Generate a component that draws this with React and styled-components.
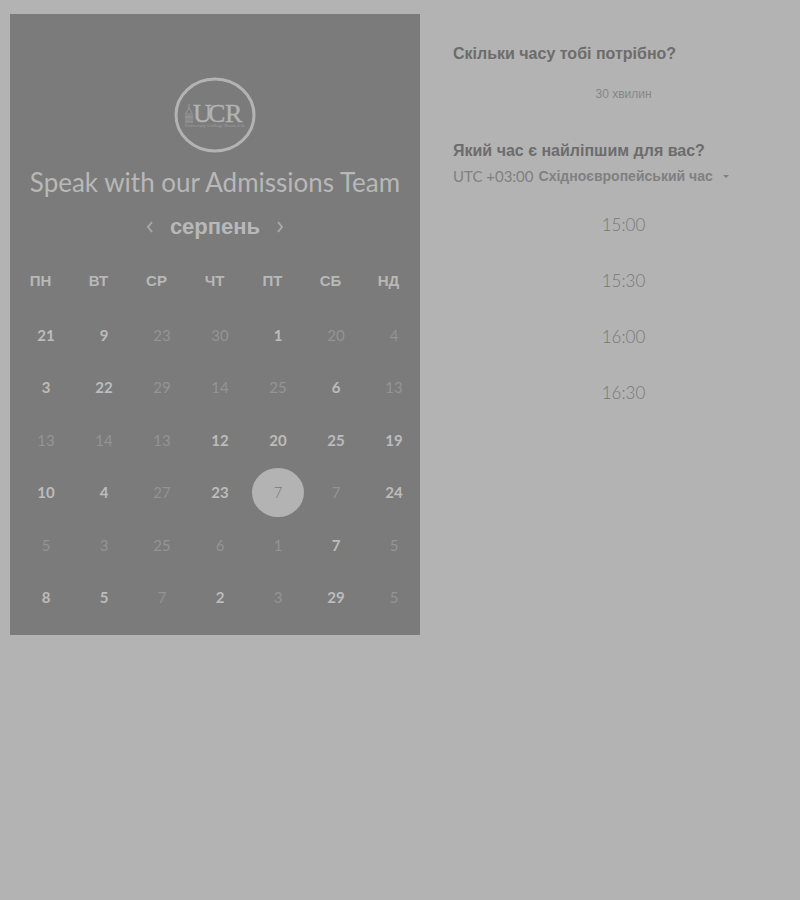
import React, { useState } from "react";
import styled, { createGlobalStyle } from "styled-components";

const GlobalStyle = createGlobalStyle`
  *, *::before, *::after { box-sizing: border-box; }
  body {
    margin: 0;
    background: #b3b3b3;
    font-family: Lato, "Liberation Sans", sans-serif;
  }
  button, select { font: inherit; color: inherit; }
`;

const Page = styled.main`
  display: grid;
  grid-template-columns: minmax(0, 410fr) minmax(0, 341fr);
  gap: 33px;
  align-items: start;
  padding: 14px 6px 14px 10px;
`;

const CalendarPanel = styled.section`
  display: flex;
  flex-direction: column;
  padding: 63px 0 12px;
  background: #7b7b7b;
  color: #b8b8b8;
`;

const Logo = styled.svg`
  display: block;
  align-self: center;
  width: 82px;
  height: 76px;
`;

const Title = styled.h1`
  margin: 13px 0 0;
  font-size: 26px;
  font-weight: 400;
  line-height: 32px;
  text-align: center;
  white-space: nowrap;
`;

const MonthBar = styled.div`
  display: flex;
  align-items: center;
  justify-content: center;
  gap: 12px;
  margin-top: 13px;
`;

const MonthName = styled.h2`
  margin: 0;
  font-family: "Liberation Sans", sans-serif;
  font-size: 22px;
  font-weight: 700;
  line-height: 32px;
`;

const MonthButton = styled.button`
  display: grid;
  place-items: center;
  width: 16px;
  height: 24px;
  padding: 0;
  border: 0;
  background: none;
  cursor: pointer;
`;

const Days = styled.table`
  width: calc(100% - 4px);
  margin: 29px 0 0 7px;
  border-collapse: collapse;
  table-layout: fixed;
`;

const Weekday = styled.th`
  padding: 0 11px 0 0;
  font-family: "Liberation Sans", sans-serif;
  font-size: 15px;
  font-weight: 700;
  line-height: 18px;
`;

const HeadRow = styled.tr`
  height: 36px;
  vertical-align: top;
`;

const Week = styled.tr`
  height: 53px;
  &:nth-child(even) { height: 52px; }
`;

const DayCell = styled.td`
  padding: 0;
`;

const Day = styled.button`
  display: block;
  width: 52px;
  height: 49px;
  margin: 0 auto;
  padding: 0;
  border: 0;
  border-radius: 50%;
  background: ${(p) => (p.$selected ? "#b3b3b3" : "transparent")};
  color: ${(p) => (p.$selected ? "#7b7b7b" : "#bcbcbc")};
  font-size: 15px;
  font-weight: ${(p) => (p.$selected ? 300 : 700)};
  line-height: 20px;
  cursor: pointer;
  &:disabled {
    color: #949494;
    font-weight: 400;
    cursor: default;
  }
`;

const Booking = styled.section`
  display: flex;
  flex-direction: column;
  padding-top: 30px;
  color: #6c6c6c;
`;

const Question = styled.h2`
  margin: 0;
  font-family: "Liberation Sans", sans-serif;
  font-size: 16px;
  font-weight: 700;
  line-height: 20px;
`;

const Duration = styled.button`
  height: 30px;
  margin: 15px 0 32px;
  padding: 0;
  border: 0;
  background: none;
  color: #868686;
  font-family: "Liberation Sans", sans-serif;
  font-size: 12px;
  cursor: pointer;
`;

const Timezone = styled.label`
  display: flex;
  align-items: center;
  gap: 5px;
  margin-top: 5px;
  color: #808080;
  font-size: 15px;
  line-height: 20px;
  white-space: nowrap;
`;

const ZoneSelect = styled.select`
  appearance: none;
  field-sizing: content;
  padding: 0;
  border: 0;
  background: none;
  font-family: "Liberation Sans", sans-serif;
  font-size: 14px;
  font-weight: 700;
  line-height: 20px;
  cursor: pointer;
`;

const Caret = styled.svg`
  width: 8px;
  height: 5px;
  margin-left: 4px;
  fill: #808080;
`;

const Slots = styled.div`
  display: grid;
  gap: 16px;
  margin-top: 18px;
`;

const Slot = styled.button`
  height: 40px;
  padding: 0;
  border: 0;
  background: none;
  color: #787878;
  font-size: 17px;
  font-weight: 300;
  cursor: pointer;
`;

const WEEKDAYS = ["ПН", "ВТ", "СР", "ЧТ", "ПТ", "СБ", "НД"];

// A leading "+" marks a day that can be booked.
const WEEKS = [
  ["+21", "+9", "23", "30", "+1", "20", "4"],
  ["+3", "+22", "29", "14", "25", "+6", "13"],
  ["13", "14", "13", "+12", "+20", "+25", "+19"],
  ["+10", "+4", "27", "+23", "+7", "7", "+24"],
  ["5", "3", "25", "6", "1", "+7", "5"],
  ["+8", "+5", "7", "+2", "3", "+29", "5"],
];

const SLOTS = ["15:00", "15:30", "16:00", "16:30"];

function UcrLogo() {
  return (
    <Logo viewBox="0 0 82 76" role="img" aria-label="UCR">
      <ellipse cx="41" cy="38" rx="39" ry="36" fill="none" stroke="#b3b3b3" strokeWidth="3" />
      <g fill="none" stroke="#999999" strokeWidth="1">
        <path d="M15 27v5M12 45V36l3-5 3 5v9M14 45v-9M16 45v-9M11 40h8M11 45h8" />
      </g>
      <text y="45" fill="#b3b3b3" stroke="#b3b3b3" strokeWidth="0.4" fontFamily="Liberation Serif, serif" fontSize="26">
        <tspan x="19">U</tspan>
        <tspan x="34">C</tspan>
        <tspan x="51">R</tspan>
      </text>
      <text x="11" y="50" fill="#a0a0a0" fontFamily="Liberation Serif, serif" fontSize="5">
        University College Roosevelt
      </text>
    </Logo>
  );
}

function Chevron({ d }) {
  return (
    <svg width="8" height="12" viewBox="0 0 8 12" fill="none" stroke="#a8a8a8" strokeWidth="2" aria-hidden="true">
      <path d={d} />
    </svg>
  );
}

export default function App() {
  const [selected, setSelected] = useState("3-4");
  return (
    <>
      <GlobalStyle />
      <Page>
        <CalendarPanel>
          <UcrLogo />
          <Title>Speak with our Admissions Team</Title>
          <MonthBar>
            <MonthButton type="button" aria-label="Попередній місяць">
              <Chevron d="M6 1 2 6l4 5" />
            </MonthButton>
            <MonthName>серпень</MonthName>
            <MonthButton type="button" aria-label="Наступний місяць">
              <Chevron d="m2 1 4 5-4 5" />
            </MonthButton>
          </MonthBar>
          <Days>
            <thead>
              <HeadRow>
                {WEEKDAYS.map((name) => (
                  <Weekday key={name} scope="col">{name}</Weekday>
                ))}
              </HeadRow>
            </thead>
            <tbody>
              {WEEKS.map((week, row) => (
                <Week key={row}>
                  {week.map((entry, col) => {
                    const id = `${row}-${col}`;
                    return (
                      <DayCell key={id}>
                        <Day
                          type="button"
                          disabled={!entry.startsWith("+")}
                          $selected={id === selected}
                          aria-pressed={id === selected}
                          onClick={() => setSelected(id)}
                        >
                          {entry.replace("+", "")}
                        </Day>
                      </DayCell>
                    );
                  })}
                </Week>
              ))}
            </tbody>
          </Days>
        </CalendarPanel>
        <Booking>
          <Question>Скільки часу тобі потрібно?</Question>
          <Duration type="button">30 хвилин</Duration>
          <Question>Який час є найліпшим для вас?</Question>
          <Timezone>
            <span>UTC +03:00</span>
            <ZoneSelect defaultValue="eet">
              <option value="eet">Східноєвропейський час</option>
            </ZoneSelect>
            <Caret viewBox="0 0 8 5" aria-hidden="true">
              <path d="M1 1h6L4 4z" />
            </Caret>
          </Timezone>
          <Slots>
            {SLOTS.map((time) => (
              <Slot key={time} type="button">{time}</Slot>
            ))}
          </Slots>
        </Booking>
      </Page>
    </>
  );
}
